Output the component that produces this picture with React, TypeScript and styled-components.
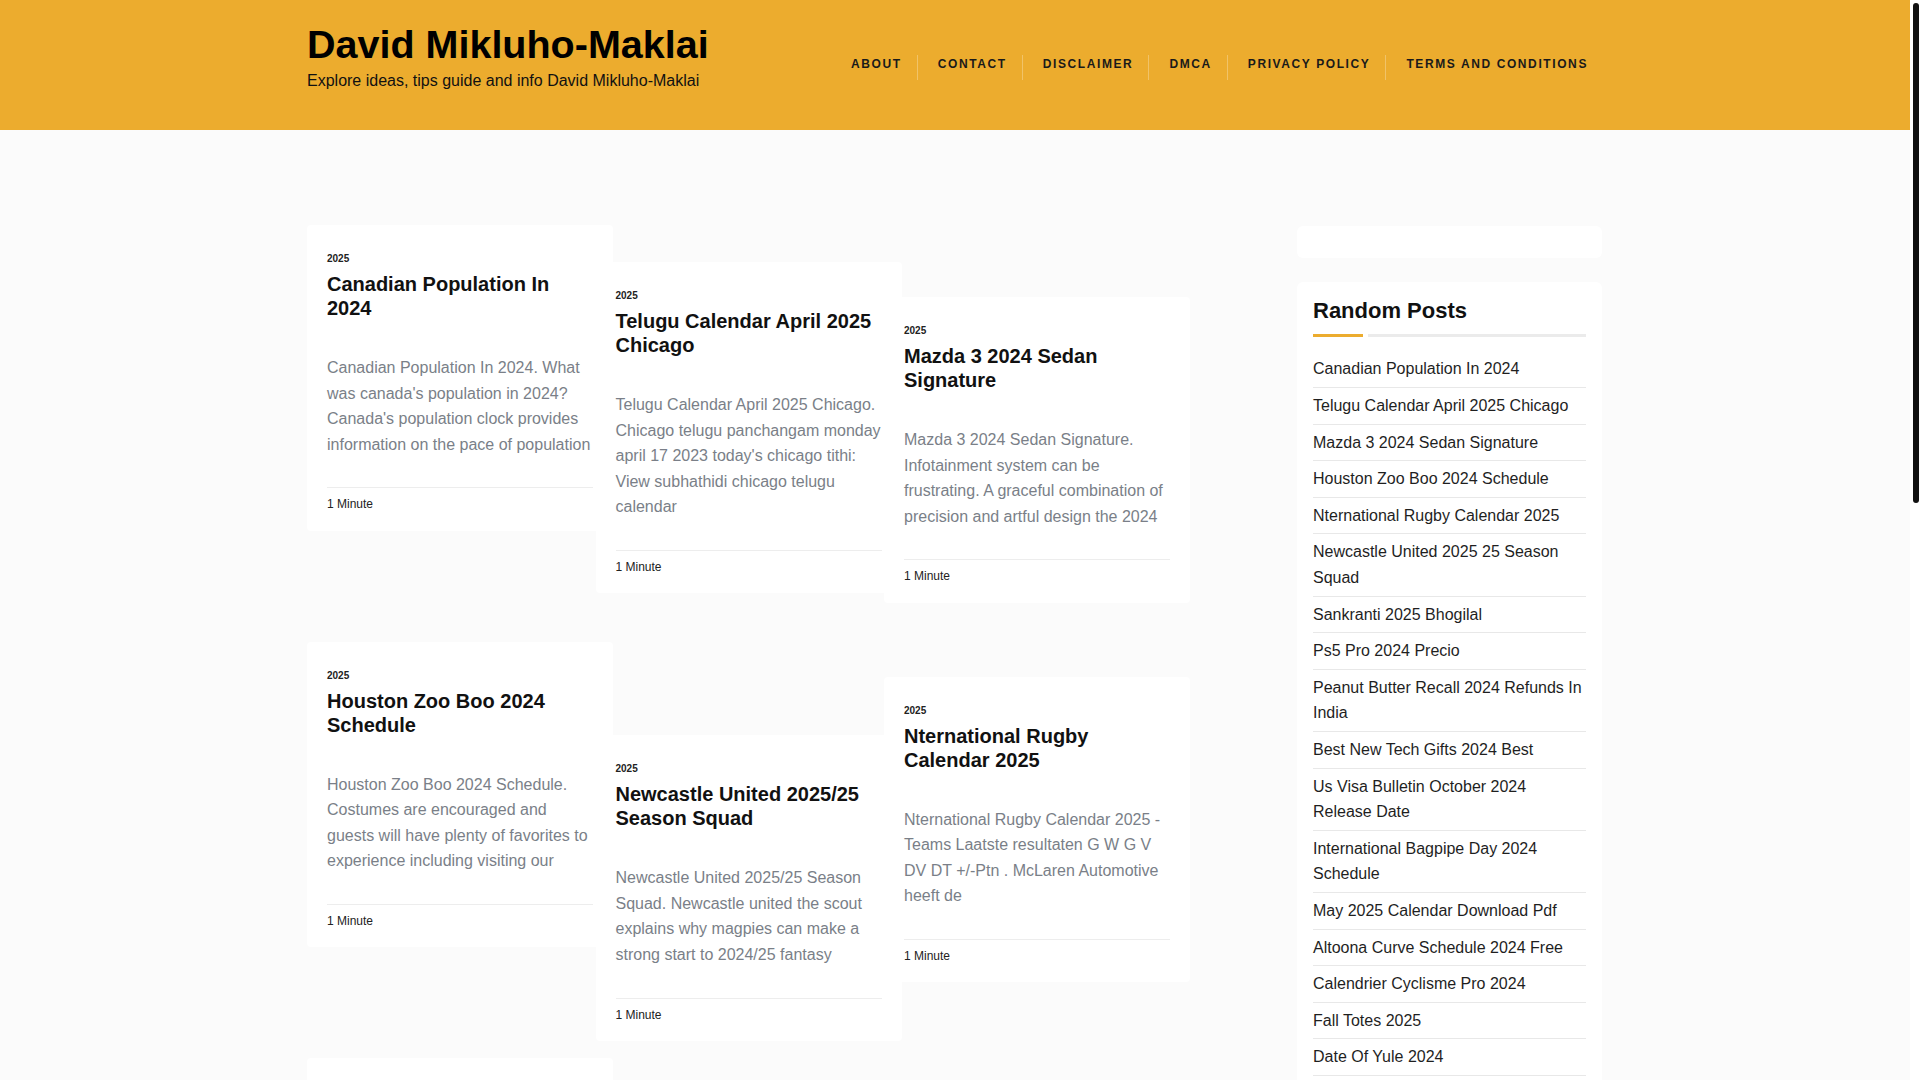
import styled, { createGlobalStyle } from 'styled-components'

const GlobalStyle = createGlobalStyle`
  html {
    scrollbar-width: none;
  }
  ::-webkit-scrollbar {
    display: none;
  }
  body {
    margin: 0 10px 0 0;
    background: #fbfbfb;
    font-family: 'Liberation Sans', Arial, sans-serif;
    color: #222;
  }
`

/* the page's custom scrollbar, drawn over the right edge of the viewport */
const ScrollTrack = styled.div`
  position: fixed;
  top: 0;
  right: 0;
  width: 10px;
  height: 100vh;
  background: #fff;
`

const ScrollThumb = styled.div`
  margin: 3px 1px 0 3px;
  height: 500px;
  border-radius: 3px;
  background: #111;
`

const Header = styled.header`
  background: #ecac2e;
  height: 130px;
`

const Container = styled.div`
  width: 1296px;
  margin: 0 auto;
`

const HeaderInner = styled(Container)`
  display: flex;
  justify-content: space-between;
  align-items: flex-start;
`

const Brand = styled.div`
  padding-top: 21px;
`

const SiteTitle = styled.h1`
  margin: 0;
  font-size: 39.5px;
  line-height: 1.2;
  font-weight: 700;
  color: #000;
`

const Tagline = styled.p`
  margin: 1px 0 0;
  font-size: 16px;
  line-height: 24px;
  color: #111;
`

const Nav = styled.nav`
  display: flex;
  margin-top: 55px;
`

const NavItem = styled.a`
  display: block;
  padding: 0 15px 6px 20px;
  font-size: 12px;
  line-height: 19px;
  font-weight: 700;
  letter-spacing: 1.6px;
  text-transform: uppercase;
  color: #1a1a1a;
  text-decoration: none;
  & + & {
    border-left: 1px solid rgba(255, 255, 255, 0.28);
  }
`

const Main = styled(Container)`
  display: flex;
  align-items: flex-start;
  padding-top: 95px;
  min-height: 2100px;
`

const Posts = styled.div`
  display: grid;
  grid-template-columns: repeat(3, 288.5px);
  align-items: start;
`

const Column = styled.div<{ $lead: number }>`
  display: flex;
  flex-direction: column;
  padding-top: ${({ $lead }) => $lead}px;
`

const Card = styled.article<{ $gap: number }>`
  width: calc(100% + 17.5px);
  box-sizing: border-box;
  margin-top: ${({ $gap }) => $gap}px;
  padding: 26px 20px 16px;
  background: #fff;
  border-radius: 4px;
`

const Year = styled.div`
  font-size: 10px;
  line-height: 16px;
  font-weight: 700;
  color: #222;
`

const CardTitle = styled.h2`
  margin: 5px 0 0;
  font-size: 20px;
  line-height: 24px;
  font-weight: 700;
  color: #111;
`

const Excerpt = styled.p`
  margin: 35px 0 0;
  font-size: 16px;
  line-height: 25.6px;
  color: #7a7f88;
`

const CardFooter = styled.div`
  margin-top: 30px;
  padding-top: 7px;
  border-top: 1px solid #ededed;
  font-size: 12px;
  line-height: 19.2px;
  color: #222;
`

const Sidebar = styled.aside`
  width: 305px;
  margin-left: auto;
  margin-right: 1px;
  margin-top: 1px;
  display: flex;
  flex-direction: column;
  gap: 24px;
`

const Widget = styled.section<{ $empty?: boolean }>`
  background: #fff;
  border-radius: 6px;
  padding: ${({ $empty }) => ($empty ? '0' : '16px 16px 8px')};
  height: ${({ $empty }) => ($empty ? '32px' : 'auto')};
`

const WidgetTitle = styled.h3`
  margin: 0;
  font-size: 22px;
  line-height: 26.4px;
  font-weight: 700;
  color: #111;
`

const TitleRule = styled.div`
  display: flex;
  gap: 5px;
  margin: 10px 0 14px;
  &::before {
    content: '';
    width: 50px;
    height: 3px;
    background: #ecac2e;
  }
  &::after {
    content: '';
    flex: 1;
    height: 3px;
    background: #ebebeb;
  }
`

const PostList = styled.ul`
  list-style: none;
  margin: 0;
  padding: 0;
`

const PostLink = styled.li`
  padding: 5px 0;
  border-bottom: 1px solid #e8e8e8;
  font-size: 16px;
  line-height: 1.6;
  color: #1f1f1f;
`

const menu = ['About', 'Contact', 'Disclaimer', 'DMCA', 'Privacy Policy', 'Terms and Conditions']

type Post = { title: string; excerpt: string; gap: number }

const columns: { lead: number; posts: Post[] }[] = [
  {
    lead: 0,
    posts: [
      {
        title: 'Canadian Population In 2024',
        excerpt:
          "Canadian Population In 2024. What was canada's population in 2024? Canada's population clock provides information on the pace of population",
        gap: 0,
      },
      {
        title: 'Houston Zoo Boo 2024 Schedule',
        excerpt:
          'Houston Zoo Boo 2024 Schedule. Costumes are encouraged and guests will have plenty of favorites to experience including visiting our',
        gap: 111,
      },
      {
        title: 'Sankranti 2025 Bhogilal',
        excerpt: 'Sankranti 2025 Bhogilal. Find the dates, timings and rituals for the festival season and plan',
        gap: 111,
      },
    ],
  },
  {
    lead: 37,
    posts: [
      {
        title: 'Telugu Calendar April 2025 Chicago',
        excerpt:
          "Telugu Calendar April 2025 Chicago. Chicago telugu panchangam monday april 17 2023 today's chicago tithi: View subhathidi chicago telugu calendar",
        gap: 0,
      },
      {
        title: 'Newcastle United 2025/25 Season Squad',
        excerpt:
          'Newcastle United 2025/25 Season Squad. Newcastle united the scout explains why magpies can make a strong start to 2024/25 fantasy',
        gap: 142,
      },
      {
        title: 'Ps5 Pro 2024 Precio',
        excerpt: 'Ps5 Pro 2024 Precio. Everything about the price, release and the features of the new console',
        gap: 110,
      },
    ],
  },
  {
    lead: 72,
    posts: [
      {
        title: 'Mazda 3 2024 Sedan Signature',
        excerpt:
          'Mazda 3 2024 Sedan Signature. Infotainment system can be frustrating. A graceful combination of precision and artful design the 2024',
        gap: 0,
      },
      {
        title: 'Nternational Rugby Calendar 2025',
        excerpt:
          'Nternational Rugby Calendar 2025 - Teams Laatste resultaten G W G V DV DT +/-Ptn . McLaren Automotive heeft de',
        gap: 74,
      },
      {
        title: 'Peanut Butter Recall 2024 Refunds In India',
        excerpt: 'Peanut Butter Recall 2024 Refunds In India. What to know about the recall and how to get',
        gap: 110,
      },
    ],
  },
]

const randomPosts = [
  'Canadian Population In 2024',
  'Telugu Calendar April 2025 Chicago',
  'Mazda 3 2024 Sedan Signature',
  'Houston Zoo Boo 2024 Schedule',
  'Nternational Rugby Calendar 2025',
  'Newcastle United 2025 25 Season Squad',
  'Sankranti 2025 Bhogilal',
  'Ps5 Pro 2024 Precio',
  'Peanut Butter Recall 2024 Refunds In India',
  'Best New Tech Gifts 2024 Best',
  'Us Visa Bulletin October 2024 Release Date',
  'International Bagpipe Day 2024 Schedule',
  'May 2025 Calendar Download Pdf',
  'Altoona Curve Schedule 2024 Free',
  'Calendrier Cyclisme Pro 2024',
  'Fall Totes 2025',
  'Date Of Yule 2024',
  'Lakers Schedule 2025 Printable',
  'Chinese New Year 2025 Events',
]

export default function App() {
  return (
    <>
      <GlobalStyle />
      <Header>
        <HeaderInner>
          <Brand>
            <SiteTitle>David Mikluho-Maklai</SiteTitle>
            <Tagline>Explore ideas, tips guide and info David Mikluho-Maklai</Tagline>
          </Brand>
          <Nav>
            {menu.map((item) => (
              <NavItem key={item} href="#">
                {item}
              </NavItem>
            ))}
          </Nav>
        </HeaderInner>
      </Header>
      <Main>
        <Posts>
          {columns.map((col, i) => (
            <Column key={i} $lead={col.lead}>
              {col.posts.map((post) => (
                <Card key={post.title} $gap={post.gap}>
                  <Year>2025</Year>
                  <CardTitle>{post.title}</CardTitle>
                  <Excerpt>{post.excerpt}</Excerpt>
                  <CardFooter>1 Minute</CardFooter>
                </Card>
              ))}
            </Column>
          ))}
        </Posts>
        <Sidebar>
          <Widget $empty />
          <Widget>
            <WidgetTitle>Random Posts</WidgetTitle>
            <TitleRule />
            <PostList>
              {randomPosts.map((p) => (
                <PostLink key={p}>{p}</PostLink>
              ))}
            </PostList>
          </Widget>
        </Sidebar>
      </Main>
      <ScrollTrack>
        <ScrollThumb />
      </ScrollTrack>
    </>
  )
}
